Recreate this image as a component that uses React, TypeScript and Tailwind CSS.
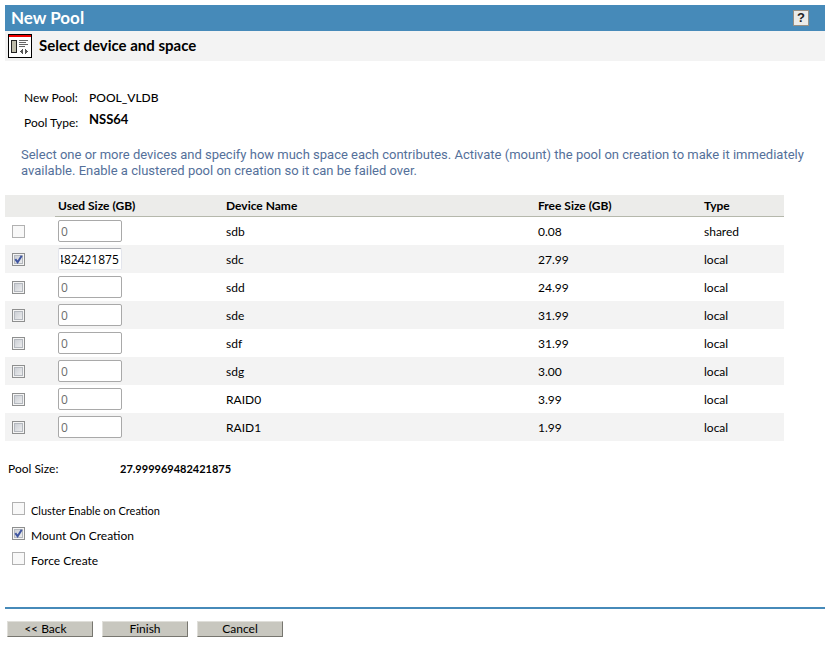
import { useEffect, useRef, useState } from "react";
import clsx from "clsx";

interface Device {
  name: string;
  free: string;
  type: "shared" | "local";
}

const devices: Device[] = [
  { name: "sdb", free: "0.08", type: "shared" },
  { name: "sdc", free: "27.99", type: "local" },
  { name: "sdd", free: "24.99", type: "local" },
  { name: "sde", free: "31.99", type: "local" },
  { name: "sdf", free: "31.99", type: "local" },
  { name: "sdg", free: "3.00", type: "local" },
  { name: "RAID0", free: "3.99", type: "local" },
  { name: "RAID1", free: "1.99", type: "local" },
];

const POOL_SIZE = "27.999969482421875";

interface CheckboxProps {
  id?: string;
  label?: string;
  defaultChecked?: boolean;
  disabled?: boolean;
  onChange?: (checked: boolean) => void;
}

function Checkbox({ id, label, defaultChecked, disabled, onChange }: CheckboxProps) {
  return (
    <span className="relative block size-[13px] shrink-0">
      <input
        id={id}
        type="checkbox"
        aria-label={label}
        defaultChecked={defaultChecked}
        disabled={disabled}
        onChange={(e) => onChange?.(e.target.checked)}
        className={clsx(
          "peer block size-[13px] appearance-none border",
          disabled
            ? "border-[#b1b1b1] bg-[#f8f8f8]"
            : "border-[#8e8f8f] bg-linear-to-br from-[#c4c8cf] to-[#f4f4f4] shadow-[inset_0_0_0_1px_#f4f4f4,inset_0_0_0_2px_#b4b8be]"
        )}
      />
      <svg
        viewBox="0 0 13 13"
        className="pointer-events-none absolute inset-0 hidden size-[13px] peer-checked:block"
        fill="none"
        stroke="#3f55a0"
        strokeWidth="2"
      >
        <path d="M3.3 6.2 L5.6 9.2 L9.7 2.8" />
      </svg>
    </span>
  );
}

function DeviceRow({ device }: { device: Device }) {
  const selected = device.name === "sdc";
  const [checked, setChecked] = useState(selected);
  const sizeRef = useRef<HTMLInputElement>(null);

  // keep the last digits of a long size in view
  useEffect(() => {
    if (sizeRef.current) sizeRef.current.scrollLeft = sizeRef.current.scrollWidth;
  }, []);

  return (
    <tr className="h-7 even:bg-[#f3f3f3]">
      <td className="pl-[7px]">
        <Checkbox
          label={`Use ${device.name}`}
          defaultChecked={selected}
          disabled={device.type === "shared"}
          onChange={setChecked}
        />
      </td>
      <td className="px-[3px]">
        <input
          ref={sizeRef}
          type="text"
          aria-label={`Used size of ${device.name}`}
          defaultValue={selected ? POOL_SIZE : "0"}
          readOnly={!checked}
          className={clsx(
            "block h-[22px] w-16 rounded-[2px] border bg-white px-[2px] font-['Open_Sans',sans-serif] text-[12px]",
            checked ? "border-[#e3e5ec] border-t-[#abadb3] text-black" : "border-[#a9a9a9] text-[#6d6d6d]"
          )}
        />
      </td>
      <td className="px-[3px] pt-px">{device.name}</td>
      <td className="px-[3px] pt-px">{device.free}</td>
      <td className="px-[3px] pt-px">{device.type}</td>
    </tr>
  );
}

function PageIcon() {
  return (
    <svg width="24" height="24" viewBox="0 0 24 24" shapeRendering="crispEdges" aria-hidden="true">
      <rect width="24" height="24" fill="#000" />
      <rect x="1" y="1" width="22" height="22" fill="#fff" />
      <rect x="1" y="1" width="22" height="2" fill="#f00000" />
      <rect x="3" y="6" width="6" height="13" fill="#222" />
      <rect x="4" y="7" width="4" height="11" fill="#bebcaa" />
      <path d="M11 6.5h9M11 8.5h7M11 10.5h9M11 12.5h6" stroke="#666" />
      <path d="M14.5 15v5M13.5 16v3M12.5 17v1M17.5 15v5M18.5 16v3M19.5 17v1" stroke="#555" />
    </svg>
  );
}

function WizardButton({ children }: { children: React.ReactNode }) {
  return (
    <button
      type="button"
      className="h-4 w-[86px] border border-t-[#e0dfda] border-r-[#77766f] border-b-[#77766f] border-l-[#e0dfda] bg-[#c8c7bf] text-[12px] leading-3"
    >
      {children}
    </button>
  );
}

export default function App() {
  return (
    <main className="bg-white pt-[5px] pr-px pl-[5px] font-['Lato','Open_Sans',sans-serif] text-[12px] leading-4 text-black">
      <header>
        <div className="flex h-[26px] items-center justify-between bg-[#468ab9] pr-4 pl-[6px]">
          <h1 className="text-[17px] font-bold text-white">New Pool</h1>
          <button
            type="button"
            aria-label="Help"
            className="size-4 border border-[#958f84] bg-[#ebebe9] font-['Liberation_Sans',sans-serif] text-[13px] leading-[14px] font-bold text-[#222]"
          >
            ?
          </button>
        </div>
        <div className="flex h-[30px] items-center gap-[7px] bg-[#f3f3f3] pl-[3px]">
          <PageIcon />
          <h2 className="pb-0.5 text-[15px] font-bold">Select device and space</h2>
        </div>
      </header>

      <dl className="grid grid-cols-[65px_1fr] gap-y-[5px] pt-[29px] pl-[19px]">
        <dt>New Pool:</dt>
        <dd className="font-medium">POOL_VLDB</dd>
        <dt className="pt-1">Pool Type:</dt>
        <dd className="text-[13px] font-bold">NSS64</dd>
      </dl>

      <p className="mt-4 pl-4 font-['Roboto',sans-serif] text-[13px] text-[#54709a]">
        Select one or more devices and specify how much space each contributes. Activate (mount) the pool on creation to make it immediately available. Enable a clustered pool on creation so it can be failed over.
      </p>

      <table className="mt-4 w-[95%] table-fixed border-separate border-spacing-0 text-left">
        <colgroup>
          <col className="w-[50px]" />
          <col className="w-[168px]" />
          <col />
          <col className="w-[166px]" />
          <col className="w-[83px]" />
        </colgroup>
        <thead className="bg-[#ececea]">
          <tr className="h-[22px]">
            <td />
            <th className="border-b border-[#b5b8ac] px-[3px] font-bold">Used Size (GB)</th>
            <th className="border-b border-[#b5b8ac] px-[3px] font-bold">Device Name</th>
            <th className="border-b border-[#b5b8ac] px-[3px] font-bold">Free Size (GB)</th>
            <th className="border-b border-[#b5b8ac] px-[3px] font-bold">Type</th>
          </tr>
        </thead>
        <tbody>
          {devices.map((device) => (
            <DeviceRow key={device.name} device={device} />
          ))}
        </tbody>
      </table>

      <div className="mt-5 flex pl-[3px]">
        <span className="w-28">Pool Size:</span>
        <output className="text-[11px] font-bold">{POOL_SIZE}</output>
      </div>

      <div className="mt-[25px] flex flex-col gap-2 pl-[7px]">
        <div className="flex gap-[6px]">
          <Checkbox id="cluster" disabled />
          <label htmlFor="cluster" className="pt-px text-[11px]">Cluster Enable on Creation</label>
        </div>
        <div className="flex gap-[6px]">
          <Checkbox id="mount" defaultChecked />
          <label htmlFor="mount" className="pt-px">Mount On Creation</label>
        </div>
        <div className="flex gap-[6px]">
          <Checkbox id="force" disabled />
          <label htmlFor="force" className="pt-px">Force Create</label>
        </div>
      </div>

      <footer className="mt-[38px] flex gap-[9px] border-t-2 border-[#468ab9] pt-3 pb-2 pl-[2px]">
        <WizardButton>&lt;&lt; Back&nbsp;&nbsp;&nbsp;</WizardButton>
        <WizardButton>Finish</WizardButton>
        <WizardButton>Cancel</WizardButton>
      </footer>
    </main>
  );
}
